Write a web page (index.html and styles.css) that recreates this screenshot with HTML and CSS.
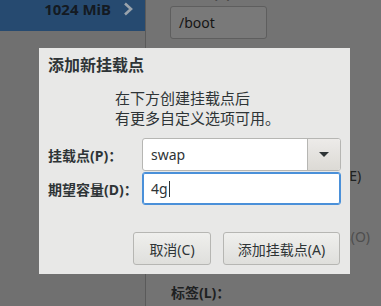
FILE: index.html
```html
<!DOCTYPE html>
<html lang="zh-CN">
  <head>
    <meta charset="UTF-8" />
    <title>添加新挂载点</title>
    <link rel="stylesheet" href="styles.css">
  </head>
  <body>
    <!-- dimmed partitioning screen behind the dialog -->
    <div class="screen">
      <div class="sidebar">
        <div class="selrow">
          <span class="size">1024 MiB</span>
          <svg class="chev" width="10" height="14" viewBox="0 0 10 14">
            <polyline points="2,1.5 8,7 2,12.5" fill="none" stroke="#9aa3ac" stroke-width="2.6" />
          </svg>
        </div>
      </div>
      <div class="detail">
        <p class="biglabel">挂载点(P)：</p>
        <div class="bootfield">/boot</div>
        <p class="side side-e">(E)</p>
        <p class="side side-o">s(O)</p>
        <p class="biglabel tag">标签(L)：</p>
      </div>
    </div>

    <!-- Add mount point dialog -->
    <div class="dialog">
      <h3 class="title">添加新挂载点</h3>
      <div class="msg">
        <p>在下方创建挂载点后<br>有更多自定义选项可用。</p>
      </div>
      <div class="form">
        <label class="flabel">挂载点(P)：</label>
        <div class="combo">
          <span class="combotext">swap</span>
          <span class="combobtn"><span class="arrow"></span></span>
        </div>
        <label class="flabel">期望容量(D)：</label>
        <div class="entry">4g<span class="caret"></span></div>
      </div>
      <div class="buttons">
        <button class="btn cancel">取消(C)</button>
        <button class="btn add">添加挂载点(A)</button>
      </div>
    </div>
  </body>
</html>
```
FILE: styles.css
```css
* {
  box-sizing: border-box;
  font-family: "Noto Sans", "Noto Sans CJK SC", sans-serif;
}

body {
  margin: 0;
  width: 381px;
  height: 306px;
  overflow: hidden;
  background-color: #727272;
  color: #2e3436;
}

.screen {
  display: flex;
  height: 306px;
}

.sidebar {
  width: 146px;
  border-right: 1px solid #5a5a5a;
  background-color: #707070;
}

.selrow {
  height: 31px;
  background-color: #264a70;
  display: flex;
  justify-content: flex-end;
  align-items: flex-start;
  padding-right: 12px;
  gap: 12px;
}

.size {
  font-size: 15px;
  line-height: 18px;
  font-weight: bold;
  color: #141a22;
}

.chev {
  margin-top: 2px;
}

.detail {
  flex: 1;
  position: relative;
  padding-left: 24px;
  background-color: #737373;
}

.biglabel {
  margin: -16px 0 0 1px;
  font-size: 14px;
  line-height: 18px;
  font-weight: bold;
  color: #1e2122;
}

.bootfield {
  width: 97px;
  height: 33px;
  margin-top: 4px;
  border: 1px solid #5e5e5e;
  border-radius: 3px;
  background-color: #797979;
  padding-left: 8px;
  font-size: 14px;
  line-height: 31px;
  color: #151515;
}

/* labels whose front half is hidden by the dialog */
.side {
  position: absolute;
  margin: 0;
  font-size: 14px;
  line-height: 18px;
}

.side-e {
  left: 199px;
  top: 167px;
  color: #1e2122;
}

.side-o {
  left: 198px;
  top: 228px;
  color: #4e4e4e;
}

.tag {
  position: absolute;
  left: 25px;
  top: 284px;
  margin: 0;
}

.dialog {
  position: absolute;
  left: 39px;
  top: 48px;
  width: 311px;
  height: 226px;
  background-color: #e8e8e7;
  padding: 6px 9px 9px 9px;
  display: flex;
  flex-direction: column;
}

.title {
  margin: 0;
  font-size: 16px;
  line-height: 22px;
  font-weight: bold;
  color: #2e3436;
}

.msg {
  display: flex;
  justify-content: center;
  margin-top: 12px;
}

.msg p {
  margin: 0;
  font-size: 15px;
  line-height: 20px;
  color: #2e3436;
  padding-left: 6px;
}

.form {
  margin-top: 10px;
  display: grid;
  grid-template-columns: 94px 1fr;
  row-gap: 1px;
  align-items: center;
}

.flabel {
  font-size: 14px;
  font-weight: bold;
  color: #2e3436;
}

.combo {
  height: 33px;
  display: flex;
  border: 1px solid #b6b6b3;
  border-radius: 3px;
  background-color: #ffffff;
  overflow: hidden;
}

.combotext {
  flex: 1;
  padding-left: 8px;
  font-size: 14px;
  line-height: 31px;
  color: #2e3436;
}

.combobtn {
  width: 33px;
  border-left: 1px solid #b6b6b3;
  background-image: linear-gradient(#edebe9, #dcdad5);
  display: flex;
  justify-content: center;
  align-items: center;
}

.arrow {
  width: 0;
  height: 0;
  border-left: 5px solid transparent;
  border-right: 5px solid transparent;
  border-top: 5px solid #2e3436;
}

.entry {
  height: 33px;
  border: 1px solid #4a90d9;
  box-shadow: inset 0 0 0 1px #4a90d9;
  border-radius: 3px;
  background-color: #ffffff;
  padding-left: 8px;
  font-size: 14px;
  line-height: 31px;
  color: #2e3436;
  display: flex;
  align-items: center;
}

.caret {
  width: 1px;
  height: 16px;
  background-color: #2e3436;
  margin-left: 1px;
}

.buttons {
  margin-top: auto;
  display: flex;
  justify-content: flex-end;
  gap: 12px;
  padding-right: 1px;
}

.btn {
  height: 33px;
  border: 1px solid #b6b6b3;
  border-radius: 3px;
  background-image: linear-gradient(#efefed, #dfdfdc);
  font-size: 14px;
  color: #2e3436;
  padding: 0;
}

.cancel {
  width: 78px;
}

.add {
  width: 117px;
}
```
